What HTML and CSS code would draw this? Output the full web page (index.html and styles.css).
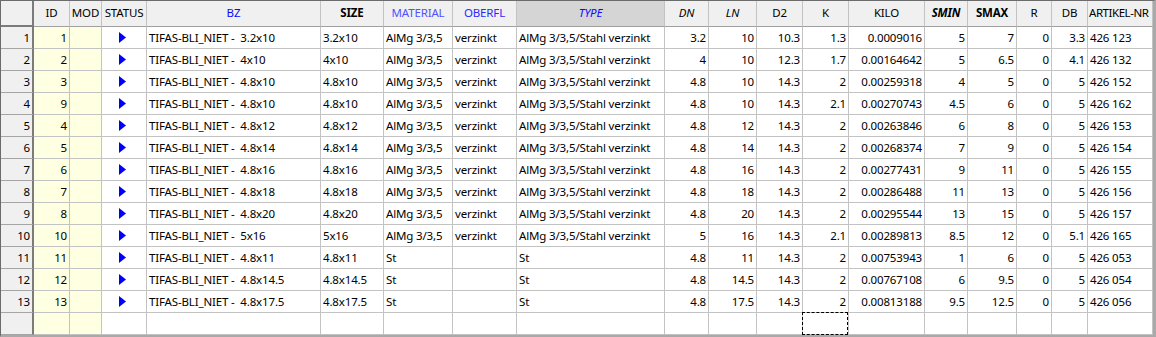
FILE: index.html
```html
<!DOCTYPE html>
<html>
<head>
<meta charset="utf-8">
<link rel="stylesheet" href="styles.css">
</head>
<body>
<div class="frame">
<div class="grid">
<div class="h corner"></div><div class="h">ID</div><div class="h">MOD</div><div class="h">STATUS</div><div class="h blue">BZ</div><div class="h b">SIZE</div><div class="h violet">MATERIAL</div><div class="h blue2">OBERFL</div><div class="h blue i sorted">TYPE</div><div class="h i">DN</div><div class="h i">LN</div><div class="h">D2</div><div class="h">K</div><div class="h">KILO</div><div class="h b i">SMIN</div><div class="h b">SMAX</div><div class="h">R</div><div class="h">DB</div><div class="h left tight">ARTIKEL-NR</div>

<div class="rh">1</div><div class="id">1</div><div class="md"></div><div class="st"><svg width="7" height="11" viewBox="0 0 7 11"><polygon points="0,0 7,5.5 0,11" fill="#0000ff"/></svg></div><div class="t">TIFAS-BLI_NIET -  3.2x10</div><div class="t">3.2x10</div><div class="t">AlMg 3/3,5</div><div class="t">verzinkt</div><div class="t">AlMg 3/3,5/Stahl verzinkt</div><div class="n">3.2</div><div class="n">10</div><div class="n">10.3</div><div class="n">1.3</div><div class="n">0.0009016</div><div class="n">5</div><div class="n">7</div><div class="n">0</div><div class="n">3.3</div><div class="t">426 123</div>

<div class="rh">2</div><div class="id">2</div><div class="md"></div><div class="st"><svg width="7" height="11" viewBox="0 0 7 11"><polygon points="0,0 7,5.5 0,11" fill="#0000ff"/></svg></div><div class="t">TIFAS-BLI_NIET -  4x10</div><div class="t">4x10</div><div class="t">AlMg 3/3,5</div><div class="t">verzinkt</div><div class="t">AlMg 3/3,5/Stahl verzinkt</div><div class="n">4</div><div class="n">10</div><div class="n">12.3</div><div class="n">1.7</div><div class="n">0.00164642</div><div class="n">5</div><div class="n">6.5</div><div class="n">0</div><div class="n">4.1</div><div class="t">426 132</div>

<div class="rh">3</div><div class="id">3</div><div class="md"></div><div class="st"><svg width="7" height="11" viewBox="0 0 7 11"><polygon points="0,0 7,5.5 0,11" fill="#0000ff"/></svg></div><div class="t">TIFAS-BLI_NIET -  4.8x10</div><div class="t">4.8x10</div><div class="t">AlMg 3/3,5</div><div class="t">verzinkt</div><div class="t">AlMg 3/3,5/Stahl verzinkt</div><div class="n">4.8</div><div class="n">10</div><div class="n">14.3</div><div class="n">2</div><div class="n">0.00259318</div><div class="n">4</div><div class="n">5</div><div class="n">0</div><div class="n">5</div><div class="t">426 152</div>

<div class="rh">4</div><div class="id">9</div><div class="md"></div><div class="st"><svg width="7" height="11" viewBox="0 0 7 11"><polygon points="0,0 7,5.5 0,11" fill="#0000ff"/></svg></div><div class="t">TIFAS-BLI_NIET -  4.8x10</div><div class="t">4.8x10</div><div class="t">AlMg 3/3,5</div><div class="t">verzinkt</div><div class="t">AlMg 3/3,5/Stahl verzinkt</div><div class="n">4.8</div><div class="n">10</div><div class="n">14.3</div><div class="n">2.1</div><div class="n">0.00270743</div><div class="n">4.5</div><div class="n">6</div><div class="n">0</div><div class="n">5</div><div class="t">426 162</div>

<div class="rh">5</div><div class="id">4</div><div class="md"></div><div class="st"><svg width="7" height="11" viewBox="0 0 7 11"><polygon points="0,0 7,5.5 0,11" fill="#0000ff"/></svg></div><div class="t">TIFAS-BLI_NIET -  4.8x12</div><div class="t">4.8x12</div><div class="t">AlMg 3/3,5</div><div class="t">verzinkt</div><div class="t">AlMg 3/3,5/Stahl verzinkt</div><div class="n">4.8</div><div class="n">12</div><div class="n">14.3</div><div class="n">2</div><div class="n">0.00263846</div><div class="n">6</div><div class="n">8</div><div class="n">0</div><div class="n">5</div><div class="t">426 153</div>

<div class="rh">6</div><div class="id">5</div><div class="md"></div><div class="st"><svg width="7" height="11" viewBox="0 0 7 11"><polygon points="0,0 7,5.5 0,11" fill="#0000ff"/></svg></div><div class="t">TIFAS-BLI_NIET -  4.8x14</div><div class="t">4.8x14</div><div class="t">AlMg 3/3,5</div><div class="t">verzinkt</div><div class="t">AlMg 3/3,5/Stahl verzinkt</div><div class="n">4.8</div><div class="n">14</div><div class="n">14.3</div><div class="n">2</div><div class="n">0.00268374</div><div class="n">7</div><div class="n">9</div><div class="n">0</div><div class="n">5</div><div class="t">426 154</div>

<div class="rh">7</div><div class="id">6</div><div class="md"></div><div class="st"><svg width="7" height="11" viewBox="0 0 7 11"><polygon points="0,0 7,5.5 0,11" fill="#0000ff"/></svg></div><div class="t">TIFAS-BLI_NIET -  4.8x16</div><div class="t">4.8x16</div><div class="t">AlMg 3/3,5</div><div class="t">verzinkt</div><div class="t">AlMg 3/3,5/Stahl verzinkt</div><div class="n">4.8</div><div class="n">16</div><div class="n">14.3</div><div class="n">2</div><div class="n">0.00277431</div><div class="n">9</div><div class="n">11</div><div class="n">0</div><div class="n">5</div><div class="t">426 155</div>

<div class="rh">8</div><div class="id">7</div><div class="md"></div><div class="st"><svg width="7" height="11" viewBox="0 0 7 11"><polygon points="0,0 7,5.5 0,11" fill="#0000ff"/></svg></div><div class="t">TIFAS-BLI_NIET -  4.8x18</div><div class="t">4.8x18</div><div class="t">AlMg 3/3,5</div><div class="t">verzinkt</div><div class="t">AlMg 3/3,5/Stahl verzinkt</div><div class="n">4.8</div><div class="n">18</div><div class="n">14.3</div><div class="n">2</div><div class="n">0.00286488</div><div class="n">11</div><div class="n">13</div><div class="n">0</div><div class="n">5</div><div class="t">426 156</div>

<div class="rh">9</div><div class="id">8</div><div class="md"></div><div class="st"><svg width="7" height="11" viewBox="0 0 7 11"><polygon points="0,0 7,5.5 0,11" fill="#0000ff"/></svg></div><div class="t">TIFAS-BLI_NIET -  4.8x20</div><div class="t">4.8x20</div><div class="t">AlMg 3/3,5</div><div class="t">verzinkt</div><div class="t">AlMg 3/3,5/Stahl verzinkt</div><div class="n">4.8</div><div class="n">20</div><div class="n">14.3</div><div class="n">2</div><div class="n">0.00295544</div><div class="n">13</div><div class="n">15</div><div class="n">0</div><div class="n">5</div><div class="t">426 157</div>

<div class="rh">10</div><div class="id">10</div><div class="md"></div><div class="st"><svg width="7" height="11" viewBox="0 0 7 11"><polygon points="0,0 7,5.5 0,11" fill="#0000ff"/></svg></div><div class="t">TIFAS-BLI_NIET -  5x16</div><div class="t">5x16</div><div class="t">AlMg 3/3,5</div><div class="t">verzinkt</div><div class="t">AlMg 3/3,5/Stahl verzinkt</div><div class="n">5</div><div class="n">16</div><div class="n">14.3</div><div class="n">2.1</div><div class="n">0.00289813</div><div class="n">8.5</div><div class="n">12</div><div class="n">0</div><div class="n">5.1</div><div class="t">426 165</div>

<div class="rh">11</div><div class="id">11</div><div class="md"></div><div class="st"><svg width="7" height="11" viewBox="0 0 7 11"><polygon points="0,0 7,5.5 0,11" fill="#0000ff"/></svg></div><div class="t">TIFAS-BLI_NIET -  4.8x11</div><div class="t">4.8x11</div><div class="t">St</div><div class="t"></div><div class="t">St</div><div class="n">4.8</div><div class="n">11</div><div class="n">14.3</div><div class="n">2</div><div class="n">0.00753943</div><div class="n">1</div><div class="n">6</div><div class="n">0</div><div class="n">5</div><div class="t">426 053</div>

<div class="rh">12</div><div class="id">12</div><div class="md"></div><div class="st"><svg width="7" height="11" viewBox="0 0 7 11"><polygon points="0,0 7,5.5 0,11" fill="#0000ff"/></svg></div><div class="t">TIFAS-BLI_NIET -  4.8x14.5</div><div class="t">4.8x14.5</div><div class="t">St</div><div class="t"></div><div class="t">St</div><div class="n">4.8</div><div class="n">14.5</div><div class="n">14.3</div><div class="n">2</div><div class="n">0.00767108</div><div class="n">6</div><div class="n">9.5</div><div class="n">0</div><div class="n">5</div><div class="t">426 054</div>

<div class="rh">13</div><div class="id">13</div><div class="md"></div><div class="st"><svg width="7" height="11" viewBox="0 0 7 11"><polygon points="0,0 7,5.5 0,11" fill="#0000ff"/></svg></div><div class="t">TIFAS-BLI_NIET -  4.8x17.5</div><div class="t">4.8x17.5</div><div class="t">St</div><div class="t"></div><div class="t">St</div><div class="n">4.8</div><div class="n">17.5</div><div class="n">14.3</div><div class="n">2</div><div class="n">0.00813188</div><div class="n">9.5</div><div class="n">12.5</div><div class="n">0</div><div class="n">5</div><div class="t">426 056</div>

<div class="rh last"></div><div class="id last"></div><div class="md last"></div><div class="st last"></div><div class="t last"></div><div class="t last"></div><div class="t last"></div><div class="t last"></div><div class="t last"></div><div class="n last"></div><div class="n last"></div><div class="n last"></div><div class="n last focus"></div><div class="n last"></div><div class="n last"></div><div class="n last"></div><div class="n last"></div><div class="n last"></div><div class="t last"></div>
</div>
</div>
</body>
</html>
```

FILE: styles.css
```css
html, body {
  margin: 0;
  padding: 0;
  background: #ffffff;
}

body {
  font-family: "Noto Sans", "Open Sans", sans-serif;
  font-size: 11.5px;
  letter-spacing: -0.15px;
  color: #000000;
}

.frame {
  width: 1156px;
  height: 337px;
  box-sizing: border-box;
  border-top: 1px solid #6b6b6b;
  border-left: 1px solid #6b6b6b;
  border-right: 3px solid #a9a9a9;
  border-bottom: 2px solid #a9a9a9;
  overflow: hidden;
}

.grid {
  display: grid;
  grid-template-columns: 33px 36px 32px 45px 174px 63px 69px 64px 148px 44px 48px 46px 46px 76px 43px 49px 35px 36px 65px;
  grid-template-rows: 26px;
  grid-auto-rows: 22px;
}

.grid > div {
  box-sizing: border-box;
  border-right: 1px solid #c3c3c3;
  border-bottom: 1px solid #c3c3c3;
  display: flex;
  align-items: center;
  white-space: pre;
  overflow: hidden;
  line-height: 15px;
}

.h {
  background: #f0f0f0;
  justify-content: center;
  padding-bottom: 2px;
  border-bottom-color: #a0a0a0 !important;
}

.corner {
  border-right: 2px solid #7b7b7b !important;
  border-bottom: 2px solid #7b7b7b !important;
}

.sorted {
  background: #d5d5d5;
}

.left {
  justify-content: flex-start;
  padding-left: 1px;
}

.tight {
  letter-spacing: -0.45px;
}

.b { font-weight: bold; }
.i { font-style: italic; }
.blue { color: #0a0aff; }
.blue2 { color: #2a2aff; }
.violet { color: #5252ff; }

.rh {
  background: #f0f0f0;
  justify-content: flex-end;
  padding-right: 2px;
  border-right: 2px solid #7b7b7b !important;
  border-bottom-color: #a5a5a5 !important;
}

.id {
  background: #ffffe1;
  justify-content: flex-end;
  padding-right: 2px;
}

.md {
  background: #ffffe1;
}

.st {
  justify-content: center;
  padding-right: 4px;
}

.t {
  padding-left: 2px;
}

.n {
  justify-content: flex-end;
  padding-right: 2px;
}

.focus {
  position: relative;
  overflow: visible !important;
}

.focus::after {
  content: "";
  position: absolute;
  left: -1px;
  top: -1px;
  right: 0;
  bottom: -1px;
  border: 1px dashed #000000;
}
```
